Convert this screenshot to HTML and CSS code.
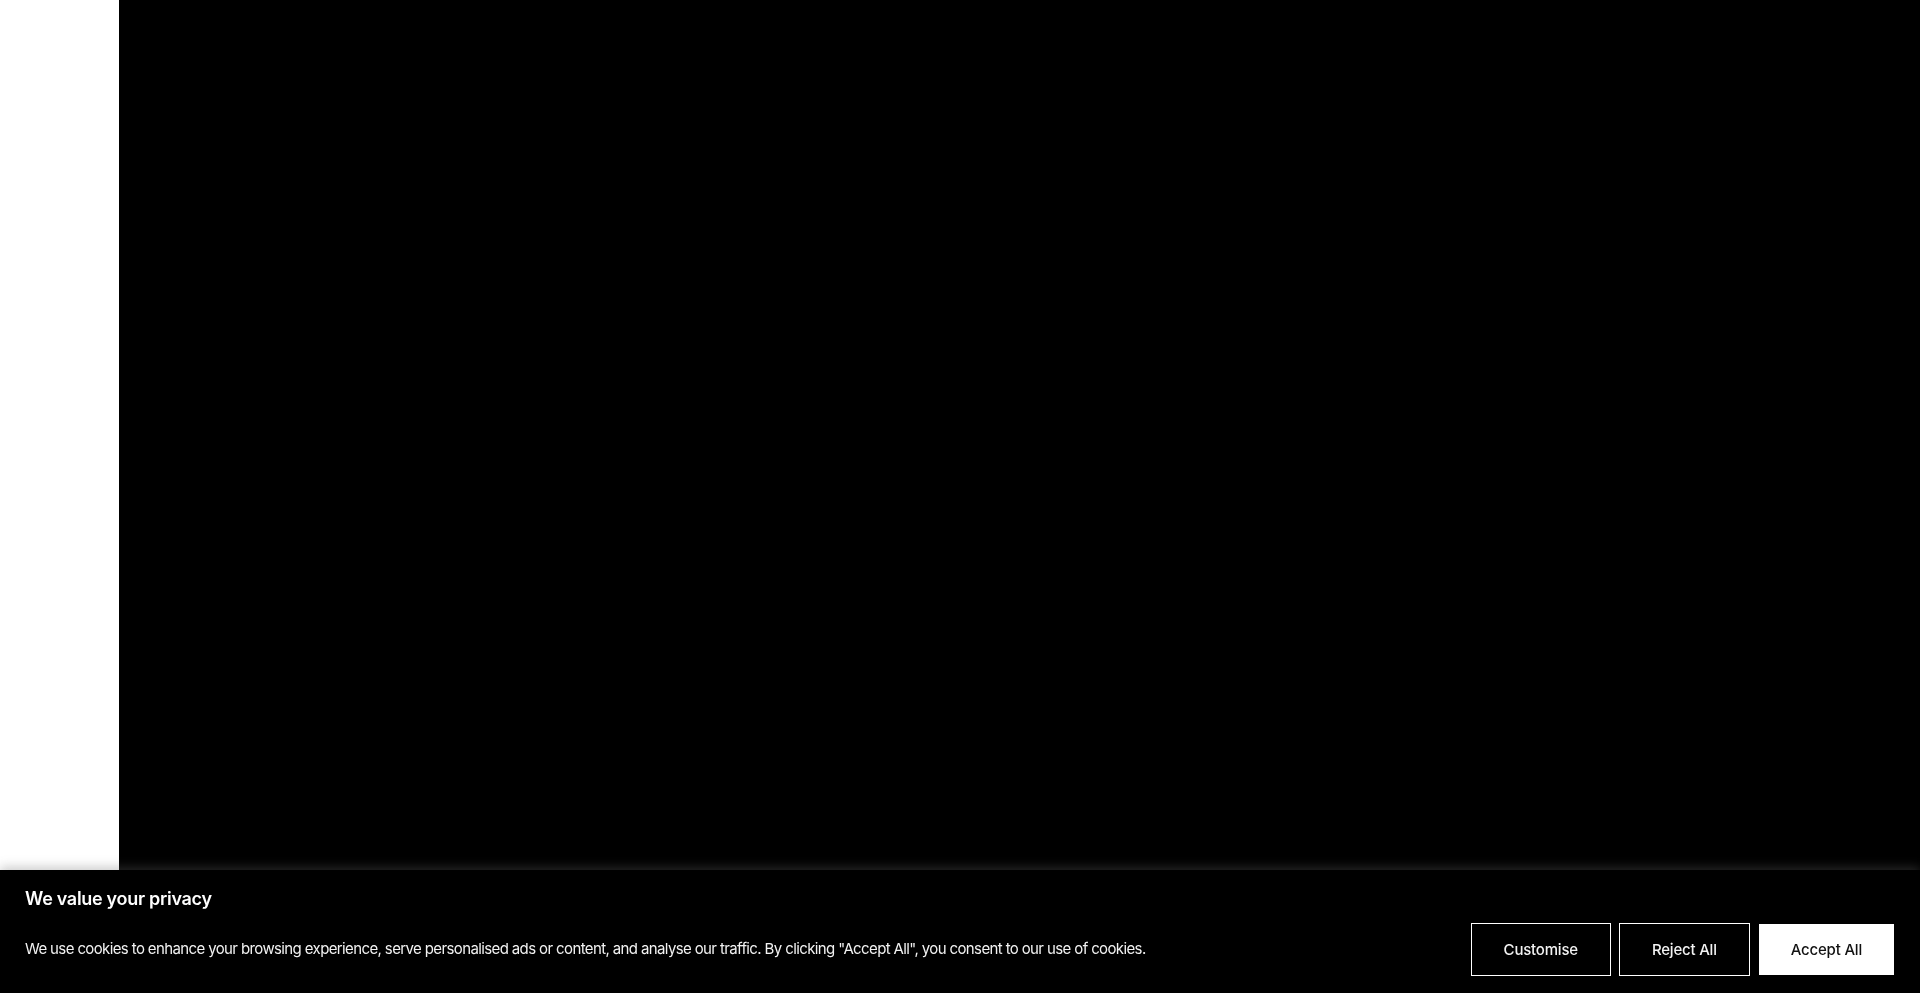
FILE: index.html
```html
<!DOCTYPE html>
<html lang="en">
<head>
<meta charset="utf-8">
<title>Privacy</title>
<link rel="stylesheet" href="styles.css">
</head>
<body>
<div class="page">
  <aside class="sidebar"></aside>
  <main class="stage"></main>
</div>
<section class="cookie-banner">
  <h2 class="cookie-title">We value your privacy</h2>
  <div class="cookie-row">
    <p class="cookie-text">We use cookies to enhance your browsing experience, serve personalised ads or content, and analyse our traffic. By clicking "Accept All", you consent to our use of cookies.</p>
    <div class="cookie-actions">
      <button class="btn btn-outline">Customise</button>
      <button class="btn btn-outline">Reject All</button>
      <button class="btn btn-solid">Accept All</button>
    </div>
  </div>
</section>
</body>
</html>
```
FILE: styles.css
```css
* { box-sizing: border-box; }
html, body { margin: 0; padding: 0; height: 100%; }
body {
  font-family: Inter, "Noto Sans", sans-serif;
  background: #000;
  overflow: hidden;
}
.page {
  display: flex;
  height: 993px;
}
.sidebar {
  width: 119px;
  flex: none;
  background: #fff;
}
.stage {
  flex: 1;
  background: #000;
}
.cookie-banner {
  position: fixed;
  left: 0;
  right: 0;
  bottom: 0;
  height: 123px;
  background: #000;
  color: #fff;
  padding: 17px 25px 17px 25px;
  box-shadow: 0 -3px 10px rgba(110, 110, 110, 0.35);
}
.cookie-title {
  margin: 0;
  font-size: 18px;
  line-height: 24px;
  font-weight: 600;
  letter-spacing: -0.3px;
}
.cookie-row {
  display: flex;
  align-items: center;
  justify-content: space-between;
  margin-top: 12px;
}
.cookie-text {
  margin: 0 0 1px;
  font-size: 15px;
  line-height: 20px;
  font-weight: 400;
  letter-spacing: -0.62px;
  color: #f2f2f2;
}
.cookie-actions {
  display: flex;
  gap: 8px;
}
.btn {
  height: 53px;
  padding: 0 32px;
  font-family: inherit;
  font-size: 15px;
  font-weight: 500;
  letter-spacing: -0.2px;
  cursor: pointer;
  border-radius: 0;
}
.btn-outline {
  background: #000;
  color: #f2f2f2;
  border: 1px solid #fff;
}
.btn-solid {
  background: #fff;
  color: #111;
  border: 1px solid #000;
}
```
